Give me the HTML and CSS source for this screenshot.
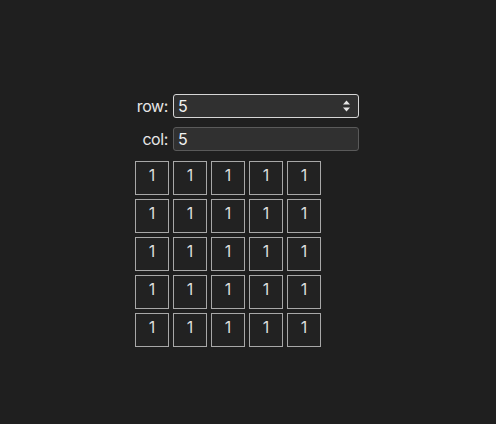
FILE: index.html
```html
<!DOCTYPE html>
<html>
<head>
<meta charset="utf-8">
<link rel="stylesheet" href="styles.css">
</head>
<body>
<div class="app">
  <div class="field">
    <label class="label">row:</label>
    <div class="input input-focus">
      <span class="value">5</span>
      <svg class="spin" width="9" height="14" viewBox="0 0 9 14"><path d="M4.5 1.5 L8 5.5 H1 Z" fill="#e6e6e6"/><path d="M4.5 12.5 L8 8.5 H1 Z" fill="#e6e6e6"/></svg>
    </div>
  </div>
  <div class="field">
    <label class="label">col:</label>
    <div class="input"><span class="value">5</span></div>
  </div>
  <div class="grid">
    <div class="cell">1</div><div class="cell">1</div><div class="cell">1</div><div class="cell">1</div><div class="cell">1</div>
    <div class="cell">1</div><div class="cell">1</div><div class="cell">1</div><div class="cell">1</div><div class="cell">1</div>
    <div class="cell">1</div><div class="cell">1</div><div class="cell">1</div><div class="cell">1</div><div class="cell">1</div>
    <div class="cell">1</div><div class="cell">1</div><div class="cell">1</div><div class="cell">1</div><div class="cell">1</div>
    <div class="cell">1</div><div class="cell">1</div><div class="cell">1</div><div class="cell">1</div><div class="cell">1</div>
  </div>
</div>
</body>
</html>
```
FILE: styles.css
```css
html, body {
  margin: 0;
  padding: 0;
  background: #1f1f1f;
  color: #e8e8e8;
  font-family: Inter, "Noto Sans", sans-serif;
}
.app {
  width: 224px;
  margin: 94px 0 0 135px;
}
.field {
  display: flex;
  align-items: center;
  gap: 5px;
  margin-bottom: 9px;
}
.label {
  width: 33px;
  text-align: right;
  font-size: 16px;
  letter-spacing: -0.4px;
  color: #e6e6e6;
}
.input {
  flex: 1;
  height: 24px;
  box-sizing: border-box;
  border: 1px solid #5a5a5a;
  border-radius: 3px;
  background: #303030;
  display: flex;
  align-items: center;
  padding: 0 7px 0 4px;
}
.input-focus {
  border-color: #d6d6d6;
}
.value {
  flex: 1;
  font-size: 16px;
  color: #f2f2f2;
}
.spin {
  display: block;
}
.grid {
  margin-top: 10px;
  display: grid;
  grid-template-columns: repeat(5, 34px);
  grid-auto-rows: 34px;
  gap: 4px;
}
.cell {
  box-sizing: border-box;
  border: 1px solid #a8a8a8;
  background: #222;
  text-align: center;
  font-size: 16px;
  line-height: 20px;
  padding-top: 3px;
  color: #dcdcdc;
}
```
